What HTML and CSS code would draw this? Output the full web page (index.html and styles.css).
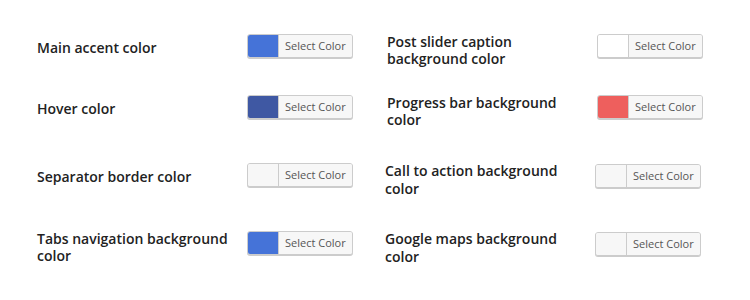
FILE: index.html
```html
<!DOCTYPE html>
<html lang="en">
<head>
<meta charset="utf-8">
<title>Color settings</title>
<link rel="stylesheet" href="styles.css">
</head>
<body>
<div class="settings">
  <div class="row row-a">
    <div class="cell">
      <div class="label">Main accent color</div>
      <button class="picker"><span class="swatch" style="background:#4573d8"></span><span class="btn-text">Select Color</span></button>
    </div>
    <div class="cell">
      <div class="label label-wrap">Post slider caption background color</div>
      <button class="picker"><span class="swatch" style="background:#ffffff"></span><span class="btn-text">Select Color</span></button>
    </div>
  </div>
  <div class="row row-b">
    <div class="cell">
      <div class="label">Hover color</div>
      <button class="picker"><span class="swatch" style="background:#3f58a3"></span><span class="btn-text">Select Color</span></button>
    </div>
    <div class="cell">
      <div class="label label-wrap">Progress bar background color</div>
      <button class="picker"><span class="swatch" style="background:#ee5f5d"></span><span class="btn-text">Select Color</span></button>
    </div>
  </div>
  <div class="row row-c">
    <div class="cell">
      <div class="label">Separator border color</div>
      <button class="picker"><span class="swatch"></span><span class="btn-text">Select Color</span></button>
    </div>
    <div class="cell cell-shift">
      <div class="label label-wrap">Call to action background color</div>
      <button class="picker"><span class="swatch"></span><span class="btn-text">Select Color</span></button>
    </div>
  </div>
  <div class="row row-d">
    <div class="cell">
      <div class="label label-wrap">Tabs navigation background color</div>
      <button class="picker"><span class="swatch" style="background:#4573d8"></span><span class="btn-text">Select Color</span></button>
    </div>
    <div class="cell cell-shift">
      <div class="label label-wrap">Google maps background color</div>
      <button class="picker"><span class="swatch"></span><span class="btn-text">Select Color</span></button>
    </div>
  </div>
</div>
</body>
</html>
```

FILE: styles.css
```css
html, body {
  margin: 0;
  padding: 0;
  background: #ffffff;
}

body {
  min-height: 300px;
  font-family: "Open Sans", "DejaVu Sans", sans-serif;
  color: #222222;
}

.settings {
  padding: 29px 0 40px 37px;
}

.row {
  display: grid;
  grid-template-columns: 350px 350px;
  grid-template-rows: 34px;
}

.row-b {
  margin-top: 27px;
}

.row-c,
.row-d {
  margin-top: 34px;
}

.cell {
  display: flex;
  align-items: center;
  min-height: 0;
}

.cell-shift {
  margin-left: -2px;
  margin-top: 1px;
}

.label {
  flex: none;
  width: 200px;
  margin-right: 10px;
  padding-top: 4px;
  font-size: 14px;
  font-weight: 600;
  line-height: 17.5px;
}

.label-wrap {
  padding-top: 8px;
}

.picker {
  display: flex;
  align-items: stretch;
  flex: none;
  box-sizing: border-box;
  height: 24px;
  padding: 0;
  margin: 0;
  border: 1px solid #cccccc;
  border-radius: 3px;
  box-shadow: 0 1px 0 #cccccc;
  background: #f7f7f7;
  overflow: hidden;
  font-family: inherit;
  cursor: pointer;
}

.swatch {
  width: 30px;
  background: #f7f7f7;
}

.btn-text {
  display: block;
  padding: 0 6px;
  border-left: 1px solid #cccccc;
  background: #f7f7f7;
  color: #555555;
  font-size: 11px;
  line-height: 22px;
}
```
